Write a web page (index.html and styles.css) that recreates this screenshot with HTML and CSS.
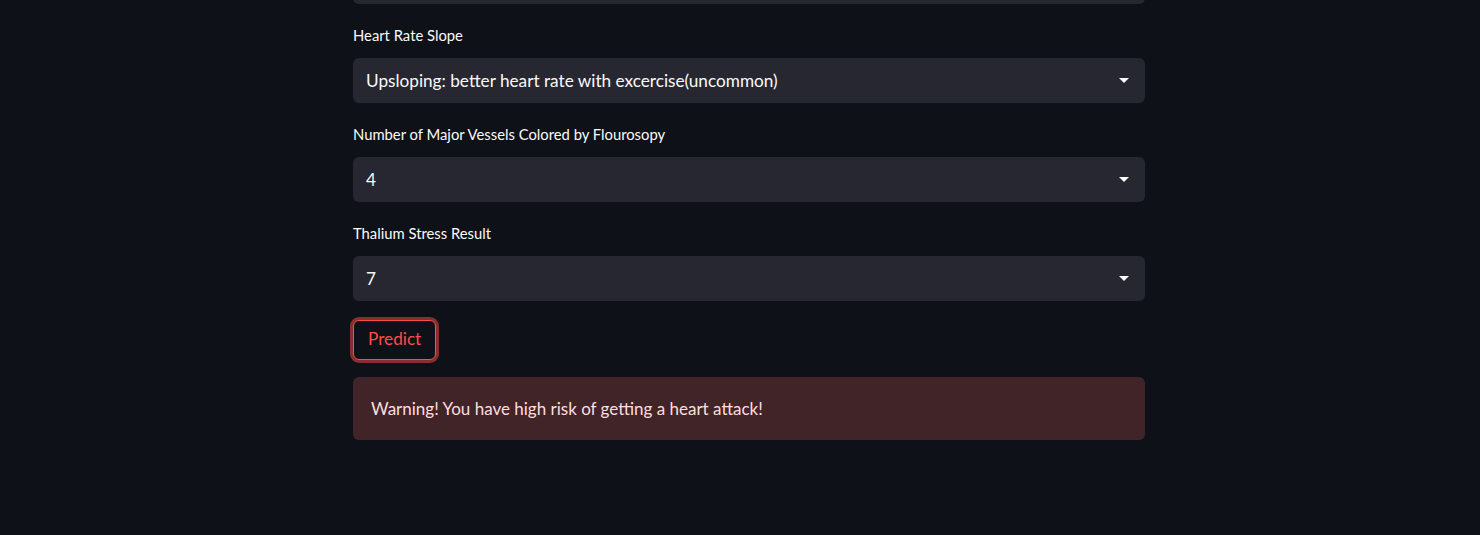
FILE: index.html
```html
<!DOCTYPE html>
<html>
<head>
<meta charset="utf-8">
<link rel="stylesheet" href="styles.css">
</head>
<body>
<main class="main">
  <div class="block">
    <div class="select select-cut"><span class="value"></span><span class="arrow"></span></div>
  </div>
  <div class="block">
    <label class="label">Heart Rate Slope</label>
    <div class="select"><span class="value">Upsloping: better heart rate with excercise(uncommon)</span><span class="arrow"></span></div>
  </div>
  <div class="block">
    <label class="label">Number of Major Vessels Colored by Flourosopy</label>
    <div class="select"><span class="value">4</span><span class="arrow"></span></div>
  </div>
  <div class="block">
    <label class="label">Thalium Stress Result</label>
    <div class="select"><span class="value">7</span><span class="arrow"></span></div>
  </div>
  <div class="block">
    <button class="btn">Predict</button>
  </div>
  <div class="block">
    <div class="alert">Warning! You have high risk of getting a heart attack!</div>
  </div>
</main>
</body>
</html>
```

FILE: styles.css
```css
html, body {
  margin: 0;
  padding: 0;
  background: #0e1117;
  height: 100%;
  overflow: hidden;
}
body {
  font-family: "Source Sans Pro", Lato, "Noto Sans", sans-serif;
  color: #fafafa;
}
.main {
  width: 792px;
  margin-left: 353px;
  margin-top: -41px;
  display: flex;
  flex-direction: column;
  gap: 16px;
}
.block {
  display: flex;
  flex-direction: column;
  align-items: flex-start;
}
.label {
  font-size: 14.8px;
  line-height: 21px;
  height: 21px;
  padding-top: 5px;
  margin-bottom: 12px;
  color: #fafafa;
}
.select {
  box-sizing: border-box;
  width: 100%;
  height: 45px;
  background: #262730;
  border-radius: 6px;
  display: flex;
  align-items: center;
  justify-content: space-between;
  padding: 0 16px 0 13px;
  font-size: 17.2px;
}
.value {
  color: #fafafa;
}
.arrow {
  width: 0;
  height: 0;
  border-left: 5px solid transparent;
  border-right: 5px solid transparent;
  border-top: 5px solid #fafafa;
}
.btn {
  margin-top: 3px;
  height: 40px;
  padding: 0 14px 3px;
  background: #0e1117;
  color: #ff4b4b;
  border: 1px solid #ff4b4b;
  border-radius: 6px;
  box-shadow: 0 0 0 3px rgba(255, 75, 75, 0.5);
  font-family: inherit;
  font-size: 17.2px;
  cursor: pointer;
}
.alert {
  box-sizing: border-box;
  margin-top: 1px;
  width: 100%;
  height: 63px;
  background: #412428;
  border-radius: 6px;
  color: #ffdede;
  font-size: 17px;
  display: flex;
  align-items: center;
  padding: 0 18px;
}
```
